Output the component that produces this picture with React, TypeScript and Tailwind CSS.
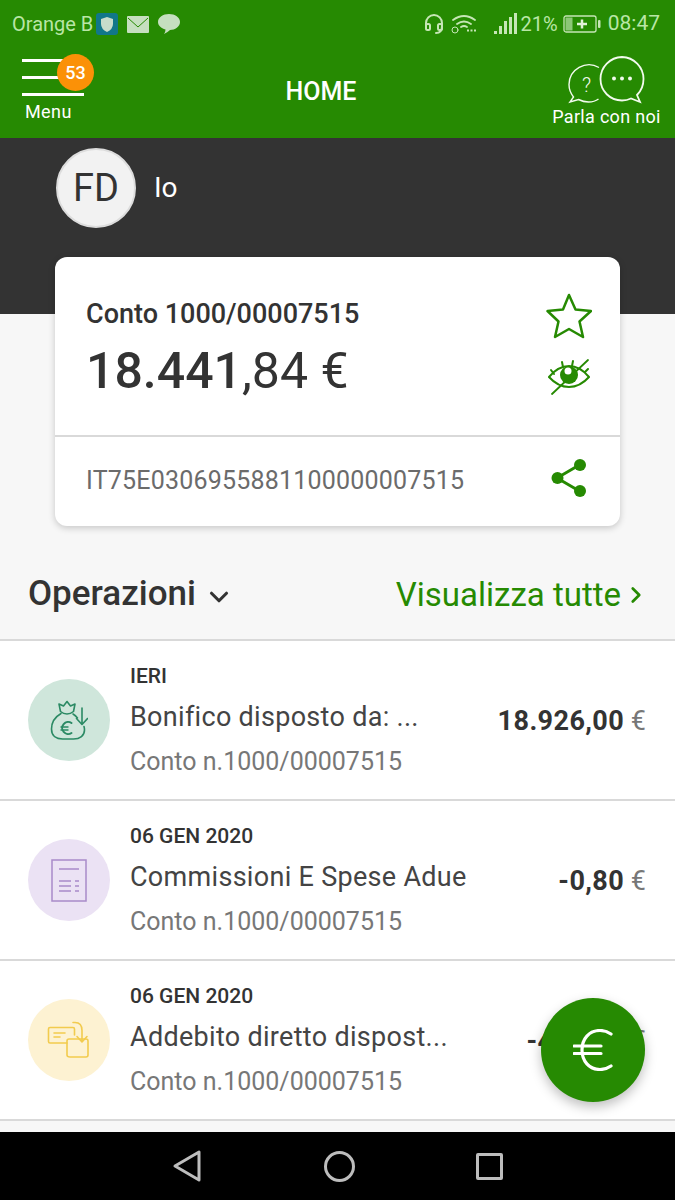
import { ChevronDown, ChevronRight } from "lucide-react";

const GREEN = "#268a02";

function MoneyBagIcon() {
  return (
    <svg width="38" height="46" viewBox="0 0 38 46" fill="none" stroke="#2b8a64" strokeWidth="1.6" strokeLinecap="round" strokeLinejoin="round">
      <path d="M9 7l4.5 2 3.5-4.500 3.500 4.500 4.500-2-1.500 7.500q-3 2.500-6.500 2.500t-6.500-2.500z" />
      <path d="M11 16.500C5 20 1.500 26 1.500 32c0 7 5 10 11 10h11c6.500 0 11-3.500 11-9 0-1.500-.2-2.500-.5-3.500" />
      <path d="M23 17q2.500 1.500 4.500 4" />
      <path d="M21.500 26a6 6 0 1 0 0 10" strokeWidth="2" />
      <path d="M11 30h7M11 33h7" strokeWidth="1.400" />
      <path d="M32 11v16M26.500 21.500L32 27.500l5.500-6" />
    </svg>
  );
}

function DocumentIcon() {
  return (
    <svg width="36" height="43" viewBox="0 0 36 43" fill="none" stroke="#a98bc9" strokeWidth="1.500">
      <rect x="1" y="1" width="34" height="41" />
      <path d="M8 10h20M8 22h12M24 22h4M8 27h12M24 27h4M8 32h12M24 32h4" />
    </svg>
  );
}

function TransferIcon() {
  return (
    <svg width="44" height="38" viewBox="0 0 44 38" fill="none" stroke="#f2cb4e" strokeWidth="1.600" strokeLinecap="round" strokeLinejoin="round">
      <path d="M20 22H3q-1.500 0-1.500-1.500V8Q1.500 6.500 3 6.500h23q1.500 0 1.500 1.500v6" />
      <path d="M7 12h11M7 16h6" />
      <path d="M20 20q0-2 2-2h17q2 0 2 2v14q0 2-2 2H23q-3 0-3-2z" />
      <path d="M26 1.500h2q7 0 7 8v11M30 15.500l5 5.500 5-5.500" />
    </svg>
  );
}

const rows = [
  { date: "IERI", title: "Bonifico disposto da: ...", amount: "18.926,00", bg: "bg-[#cfe6db]", icon: <MoneyBagIcon /> },
  { date: "06 GEN 2020", title: "Commissioni E Spese Adue", amount: "-0,80", bg: "bg-[#ebe2f4]", icon: <DocumentIcon /> },
  { date: "06 GEN 2020", title: "Addebito diretto dispost...", amount: "-450,00", bg: "bg-[#fdf2d2]", icon: <TransferIcon /> },
];

function StatusBar() {
  return (
    <div className="flex h-[46px] items-center justify-between pl-3 pr-[15px] pt-0.5 text-[21px] text-[#b9e6a6]">
      <div className="flex items-center gap-[5px]">
        <span className="text-[20px]">Orange B</span>
        <svg width="22" height="22" viewBox="0 0 22 22" className="-ml-[2px]">
          <rect width="22" height="22" rx="3" fill="#11778a" />
          <path d="M5 6l6-2 6 2v5q0 5-6 8-6-3-6-8z" fill="#c6dccb" />
        </svg>
        <svg width="22" height="17" viewBox="0 0 22 17" className="ml-1">
          <rect width="22" height="17" rx="1" fill="#c6dfc0" />
          <path d="M1 2l10 9 10-9" fill="none" stroke="#268a02" strokeWidth="1" />
        </svg>
        <svg width="22" height="20" viewBox="0 0 22 20" className="ml-1">
          <path d="M11 0c6 0 11 3.500 11 8s-5 8-10 8q-2 2-6 4 1.500-2 1.500-4.500C3 14 0 11.500 0 8c0-4.500 5-8 11-8z" fill="#c6dfc0" />
        </svg>
      </div>
      <div className="flex items-center">
        <svg width="20" height="20" viewBox="0 0 20 20" fill="none" stroke="#c6e6b6" strokeWidth="2" strokeLinecap="round">
          <path d="M2 12V9a8 8 0 0 1 16 0v3q0 7-6 7" />
          <rect x="2" y="10" width="4" height="6" rx="1.500" />
          <rect x="14" y="10" width="4" height="6" rx="1.500" />
        </svg>
        <svg width="29" height="20" viewBox="0 0 29 20" fill="none" stroke="#c6e6b6" strokeWidth="1.800" strokeLinecap="round" className="ml-[6px]">
          <path d="M3 6q11-8 22 0M7 10q7-5 14 0M11 13q3-2 6 0" />
          <circle cx="5" cy="16" r="3" strokeWidth="1" />
          <path d="M17 16.500h10" strokeWidth="2" strokeDasharray="2 1.500" strokeLinecap="butt" />
        </svg>
        <svg width="24" height="24" viewBox="0 0 24 24" fill="#c6e6b6" className="ml-[14px]">
          <rect x="1" y="19" width="3" height="3" />
          <rect x="6" y="14" width="3" height="8" />
          <rect x="11" y="9" width="3" height="13" />
          <rect x="16" y="5" width="3" height="17" />
          <rect x="21" y="1" width="3" height="21" />
        </svg>
        <span className="ml-[4px] text-[20px]">21%</span>
        <svg width="38" height="20" viewBox="0 0 38 20" className="ml-[5px]">
          <rect x="1" y="2" width="32" height="16" rx="2" fill="none" stroke="#c6e6b6" strokeWidth="1.300" />
          <rect x="2.500" y="3.500" width="7" height="13" fill="#8cc777" />
          <path d="M14 10h10M19 5.500v9" stroke="#e2f2da" strokeWidth="2.500" />
          <rect x="35" y="6" width="2.500" height="8" rx="1" fill="#c6e6b6" />
        </svg>
        <span className="ml-[7px] text-[21px]">08:47</span>
      </div>
    </div>
  );
}

function Header() {
  return (
    <div className="flex h-[92px] items-start justify-between text-white">
      <div className="relative w-[104px] pl-[22px] pt-[13px]">
        <div className="flex w-[62px] flex-col gap-[14px]">
          <div className="h-[3px] bg-white" />
          <div className="h-[3px] bg-white" />
          <div className="h-[3px] bg-white" />
        </div>
        <div className="absolute left-[57px] top-[8px] flex h-[37px] w-[37px] items-center justify-center rounded-full bg-[#fb9107] text-[18px] font-medium">
          53
        </div>
        <div className="mt-[4px] pl-[3px] text-[18px] leading-[24px] tracking-[0.4px]">Menu</div>
      </div>
      <div className="pt-[29px] text-[25px] font-medium leading-[34px]">HOME</div>
      <div className="flex w-[137px] flex-col items-center pt-[10px]">
        <svg width="78" height="48" viewBox="0 0 78 48" fill="none" stroke="#f2fbee" className="ml-[-1px]">
          <path d="M32 11.500a20 20 0 0 0-30 17c0 5 1.800 9 4.500 12.500L3 46l8.500-2.500q5 2.500 10 2.500 6 0 10-3" strokeWidth="1.400" />
          <text x="15" y="36" fontSize="20" fill="#f2fbee" stroke="none" fontFamily="Roboto, sans-serif" fontWeight="300">?</text>
          <path d="M55 1a22 22 0 0 0-21.500 22c0 12 9.500 21.500 21.500 21.500q5 0 9-2L73 46l-3-7q6.500-6.500 6.500-16A22 22 0 0 0 55 1z" strokeWidth="1.800" />
          <circle cx="47" cy="22.500" r="2" fill="#f2fbee" stroke="none" />
          <circle cx="55" cy="22.500" r="2" fill="#f2fbee" stroke="none" />
          <circle cx="63" cy="22.500" r="2" fill="#f2fbee" stroke="none" />
        </svg>
        <div className="mt-[1px] text-[18px] leading-[24px] tracking-[0.3px]">Parla con noi</div>
      </div>
    </div>
  );
}

function AccountCard() {
  return (
    <div className="relative mx-[55px] -mt-[57px] h-[269px] rounded-[12px] bg-white shadow-[0_2px_7px_rgba(0,0,0,0.2)]">
      <div className="flex h-[180px] justify-between border-b-2 border-[#d9d9d9] pl-[31px] pr-[28px]">
        <div>
          <div className="pt-[38px] text-[27px] font-medium leading-[38px] text-[#333]">Conto 1000/00007515</div>
          <div className="mt-[9px] text-[50px] leading-[58px] text-[#333]">
            <span className="font-medium">18.441</span>
            <span>,84 €</span>
          </div>
        </div>
        <div className="flex flex-col items-center pt-[36px]">
          <svg width="46" height="46" viewBox="0 0 46 46" fill="none" stroke={GREEN} strokeWidth="2.500" strokeLinejoin="round">
            <path d="M23 2l6.500 14.500 15.500 1.500-11.500 10.500 3.500 15.500L23 36l-14 8 3.500-15.500L1.500 18 17 16.500z" />
          </svg>
          <svg width="42" height="36" viewBox="0 0 42 36" fill="none" stroke={GREEN} strokeWidth="2" strokeLinecap="round" className="mt-[20px]">
            <path d="M1 18q9-11 20-11t20 11q-9 10-20 10T1 18z" />
            <circle cx="21" cy="16" r="9" fill={GREEN} stroke="none" />
            <circle cx="20" cy="12" r="3.500" fill="#fff" stroke="none" />
            <path d="M3 11l3 4M14 3l1 5M25 2l-1 5M40 10l-3 3" />
            <path d="M4 35L40 1" strokeWidth="1.800" />
          </svg>
        </div>
      </div>
      <div className="flex h-[87px] items-center justify-between pl-[31px] pr-[33px]">
        <span className="text-[25px] tracking-[0.2px] text-[#6b6b6b]">IT75E0306955881100000007515</span>
        <svg width="36" height="38" viewBox="0 0 36 38" fill={GREEN} stroke={GREEN} className="-mt-[6px]">
          <path d="M6 19L30 5M6 19l24 14" strokeWidth="3" fill="none" />
          <circle cx="6.500" cy="19" r="6" stroke="none" />
          <circle cx="29" cy="6" r="6" stroke="none" />
          <circle cx="29" cy="32" r="6" stroke="none" />
        </svg>
      </div>
    </div>
  );
}

function OperationRow({ date, title, amount, bg, icon }: (typeof rows)[number]) {
  return (
    <div className="flex h-[160px] items-center border-b-2 border-[#d9d9d9] bg-white pl-[28px] pr-[29px]">
      <div className={`flex h-[82px] w-[82px] shrink-0 items-center justify-center rounded-full ${bg}`}>{icon}</div>
      <div className="ml-[20px] min-w-0 flex-1">
        <div className="text-[21px] font-medium leading-[28px] text-[#333]">{date}</div>
        <div className="mt-[9px] text-[27px] leading-[36px] tracking-[0.3px] text-[#444]">{title}</div>
        <div className="mt-[11px] text-[25px] leading-[32px] text-[#777]">Conto n.1000/00007515</div>
      </div>
      <div className="whitespace-nowrap pt-[3px] text-[27px] text-[#333]">
        <span className="font-bold tracking-[0.4px]">{amount}</span>
        <span className="text-[#777]"> €</span>
      </div>
    </div>
  );
}

export default function App() {
  return (
    <div className="relative h-[1200px] w-[675px] overflow-hidden bg-[#f7f7f7] font-['Roboto',sans-serif]">
      <div className="bg-[#268a02]">
        <StatusBar />
        <Header />
      </div>
      <div className="h-[176px] bg-[#333]">
        <div className="flex items-center pl-[56px] pt-[10px]">
          <div className="flex h-[80px] w-[80px] items-center justify-center rounded-full border-2 border-[#ddd] bg-[#f2f2f2] text-[38px] text-[#333]">
            FD
          </div>
          <span className="ml-[18px] text-[28px] text-white">Io</span>
        </div>
      </div>
      <AccountCard />
      <div className="flex h-[115px] items-center justify-between border-b-2 border-[#d9d9d9] pl-[28px] pr-[26px] pt-[24px]">
        <div className="flex items-center gap-[8px]">
          <span className="text-[35px] font-medium text-[#333]">Operazioni</span>
          <ChevronDown size={30} color="#333" strokeWidth={2.5} className="mt-1" />
        </div>
        <div className="flex items-center gap-[2px]">
          <span className="text-[33px] text-[#268a02]">Visualizza tutte</span>
          <ChevronRight size={26} color="#268a02" strokeWidth={2.5} />
        </div>
      </div>
      {rows.map((row, i) => (
        <OperationRow key={i} {...row} />
      ))}
      <div className="absolute inset-x-0 bottom-0 flex h-[68px] items-center justify-between bg-black pl-[172px] pr-[172px]">
        <svg width="30" height="34" viewBox="0 0 30 34" fill="none" stroke="#bdbdbd" strokeWidth="3" strokeLinejoin="round">
          <path d="M27 3v28L3 17z" />
        </svg>
        <div className="h-[31px] w-[31px] rounded-full border-[3px] border-[#bdbdbd]" />
        <div className="h-[27px] w-[27px] rounded-[2px] border-[3px] border-[#bdbdbd]" />
      </div>
      <div className="absolute left-[541px] top-[998px] flex h-[104px] w-[104px] items-center justify-center rounded-full bg-[#268a02] shadow-[0_5px_12px_rgba(0,0,0,0.25)]">
        <svg width="40" height="42" viewBox="0 0 40 42" fill="none" stroke="#fff" strokeWidth="3.200" strokeLinecap="round">
          <path d="M38 5q-5-3.500-11-3.500C16 1.500 9 10 9 21s7 19.500 18 19.500q6 0 11-3.500" />
          <path d="M1 17h27M1 24.500h27" />
        </svg>
      </div>
    </div>
  );
}
